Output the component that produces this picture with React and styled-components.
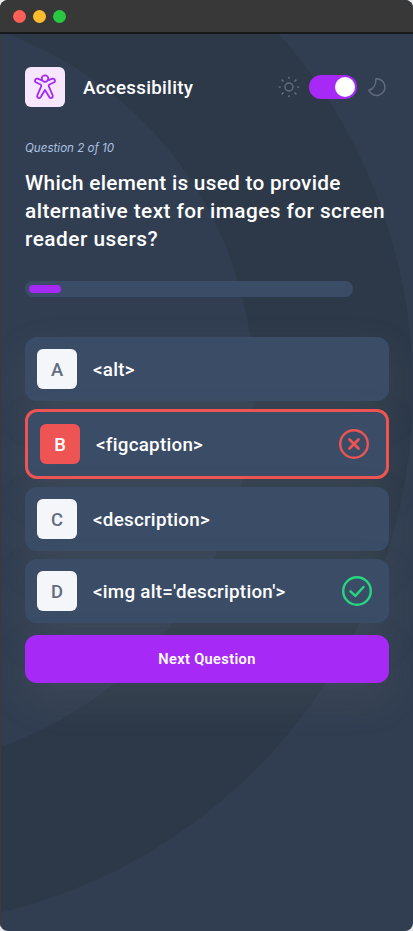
import React, { useState } from "react";
import styled, { createGlobalStyle, css } from "styled-components";

const GlobalStyle = createGlobalStyle`
  *, *::before, *::after { box-sizing: border-box; }
  html, body { margin: 0; padding: 0; background: #e9eaec; }
  button { font: inherit; color: inherit; border: 0; padding: 0; margin: 0; cursor: pointer; }
  h1, h2, p, ul { margin: 0; padding: 0; font: inherit; }
`;

const Window = styled.div`
  display: flex;
  flex-direction: column;
  width: 413px;
  height: 931px;
  border-radius: 8px;
  overflow: hidden;
  background: #313e51;
  color: #fff;
  font-family: Roboto, "Liberation Sans", sans-serif;
  font-weight: 500;
`;

const TitleBar = styled.div`
  display: flex;
  align-items: center;
  gap: 7px;
  flex: none;
  height: 34px;
  padding: 0 13px 0;
  background: #383838;
  border-bottom: 2px solid #19191c;
`;

const TrafficLight = styled.span`
  width: 13px;
  height: 13px;
  border-radius: 50%;
  background: ${(p) => p.$color};
`;

const Page = styled.main`
  position: relative;
  isolation: isolate;
  display: flex;
  flex-direction: column;
  flex: 1;
  overflow: hidden;
  padding: 33px 24px 0;
  border-left: 1px solid #3a3b3d;
`;

const Rings = styled.svg`
  position: absolute;
  inset: 0;
  z-index: -1;
`;

const Header = styled.header`
  display: flex;
  align-items: center;
  height: 40px;
`;

const SubjectTile = styled.span`
  display: grid;
  place-items: center;
  width: 40px;
  height: 40px;
  border-radius: 6px;
  background: #f6e7ff;
`;

const Subject = styled.h1`
  flex: 1;
  margin-left: 18px;
  padding-top: 2px;
  font-size: 18.8px;
  line-height: 24px;
  letter-spacing: 0.28px;
  font-weight: 500;
`;

const ThemeSwitch = styled.div`
  display: flex;
  align-items: center;
  gap: 8px;
`;

const Toggle = styled.button`
  display: flex;
  justify-content: ${(p) => (p.$on ? "flex-end" : "flex-start")};
  align-items: center;
  width: 48px;
  height: 24px;
  padding: 0 2px;
  border-radius: 12px;
  background: #a729f5;
`;

const Knob = styled.span`
  width: 20px;
  height: 20px;
  border-radius: 50%;
  background: #fff;
`;

const Counter = styled.p`
  margin-top: 32px;
  font-family: Inter, Roboto, sans-serif;
  font-size: 11.6px;
  line-height: 18px;
  font-style: italic;
  font-weight: 400;
  color: #abc1e1;
`;

const Question = styled.h2`
  margin-top: 12px;
  font-size: 20.8px;
  line-height: 28px;
  font-weight: 500;
  white-space: nowrap;
`;

const QuestionLine = styled.span`
  display: block;
  letter-spacing: ${(p) => p.$tracking}px;
`;

const Progress = styled.div`
  width: 328px;
  height: 16px;
  margin-top: 28px;
  padding: 4px;
  border-radius: 8px;
  background: #3b4d66;
`;

const ProgressFill = styled.div`
  height: 8px;
  border-radius: 4px;
  background: #a729f5;
`;

const OptionList = styled.ul`
  display: flex;
  flex-direction: column;
  gap: 8px;
  margin-top: 40px;
  list-style: none;
`;

const glow = css`
  box-shadow: 0 16px 40px rgba(143, 143, 143, 0.14);
`;

const Option = styled.li`
  display: flex;
  align-items: center;
  min-height: 64px;
  padding: 12px;
  padding-right: 16px;
  border-radius: 12px;
  background: #3b4d66;
  ${glow}
  ${(p) => p.$wrong && css`
    border: 3px solid #ee5454;
  `}
`;

const Letter = styled.span`
  display: grid;
  place-items: center;
  width: 40px;
  height: 40px;
  padding-top: 2px;
  border-radius: 6px;
  font-size: 18.4px;
  line-height: 22px;
  background: ${(p) => (p.$wrong ? "#ee5454" : "#f4f6fa")};
  color: ${(p) => (p.$wrong ? "#fff" : "#626c7f")};
`;

const Answer = styled.span`
  flex: 1;
  margin-left: 16px;
  padding-top: 2px;
  font-size: 18.8px;
  line-height: 18px;
  letter-spacing: 0.26px;
`;

const NextButton = styled.button`
  height: 48px;
  margin-top: 12px;
  border-radius: 12px;
  background: #a729f5;
  ${glow}
  && {
    font-size: 14.6px;
    font-weight: 600;
    letter-spacing: 0.35px;
  }
`;

const AccessibilityIcon = () => (
  <svg width="24" height="28" viewBox="0 0 24 28" fill="none" stroke="#a729f5" strokeWidth="1.8" strokeLinejoin="round">
    <circle cx="12" cy="5.6" r="3.3" />
    <path d="M8.9 7.4 4.7 5.7C2 4.9 1.1 8.6 3.3 9.5L7.6 11.5C8.2 12 8.4 12.6 8.2 13.4L4.4 22.2C3.5 24.9 6.8 26.1 7.9 23.8L12 17 16.1 23.8C17.2 26.1 20.5 24.9 19.6 22.2L15.8 13.4C15.6 12.6 15.8 12 16.4 11.5L20.7 9.5C22.9 8.6 22 4.9 19.3 5.7L15.1 7.4" />
  </svg>
);

const SunIcon = () => (
  <svg width="24" height="24" viewBox="0 0 24 24" fill="none" stroke="#626c7f" strokeWidth="1.5">
    <circle cx="12" cy="12" r="4" />
    <path d="M12 1.8v2M12 20.2v2M1.8 12h2M20.2 12h2M4.6 4.6l1.9 1.9M17.5 17.5l1.9 1.9M4.6 19.4l1.9-1.9M17.5 6.5l1.9-1.9" />
  </svg>
);

const MoonIcon = () => (
  <svg width="24" height="24" viewBox="0 0 24 24" fill="none" stroke="#626c7f" strokeWidth="1.5" strokeLinejoin="round">
    <path d="M10.9 3.7A8.4 8.4 0 1 1 3.8 15.3C8.2 14 11.2 9.6 10.9 3.7Z" />
  </svg>
);

const WrongIcon = () => (
  <svg width="32" height="32" viewBox="0 0 32 32" fill="none" stroke="#ee5454" strokeWidth="2.4" strokeLinecap="round">
    <circle cx="16" cy="16" r="13.8" />
    <path strokeWidth="2.8" d="m11.5 11.5 9 9m0-9-9 9" />
  </svg>
);

const RightIcon = () => (
  <svg width="32" height="32" viewBox="0 0 32 32" fill="none" stroke="#26d782" strokeWidth="2.4" strokeLinecap="round" strokeLinejoin="round">
    <circle cx="16" cy="16" r="13.8" />
    <path d="m9.5 16.3 4.8 4.6 8.2-8.9" />
  </svg>
);

const questionLines = [
  { text: "Which element is used to provide", tracking: 0.26 },
  { text: "alternative text for images for screen", tracking: 0.44 },
  { text: "reader users?", tracking: 0.51 },
];

const options = [
  { letter: "A", text: "<alt>" },
  { letter: "B", text: "<figcaption>", state: "wrong" },
  { letter: "C", text: "<description>" },
  { letter: "D", text: "<img alt='description'>", state: "right" },
];

export default function App() {
  const [dark, setDark] = useState(true);
  return (
    <>
      <GlobalStyle />
      <Window>
        <TitleBar>
          <TrafficLight $color="#ff5f57" />
          <TrafficLight $color="#febc2e" />
          <TrafficLight $color="#28c840" />
        </TitleBar>
        <Page>
          <Rings width="412" height="897" viewBox="1 34 412 897" fill="none" aria-hidden="true">
            <circle cx="-125.5" cy="389.3" r="458.8" stroke="#2d3949" strokeWidth="159" />
          </Rings>
          <Header>
            <SubjectTile><AccessibilityIcon /></SubjectTile>
            <Subject>Accessibility</Subject>
            <ThemeSwitch>
              <SunIcon />
              <Toggle $on={dark} onClick={() => setDark(!dark)} aria-label="Toggle theme"><Knob /></Toggle>
              <MoonIcon />
            </ThemeSwitch>
          </Header>
          <Counter>Question 2 of 10</Counter>
          <Question>
            {questionLines.map((l) => (
              <QuestionLine key={l.text} $tracking={l.tracking}>{l.text}</QuestionLine>
            ))}
          </Question>
          <Progress><ProgressFill style={{ width: "10%" }} /></Progress>
          <OptionList>
            {options.map((o) => (
              <Option key={o.letter} $wrong={o.state === "wrong"}>
                <Letter $wrong={o.state === "wrong"}>{o.letter}</Letter>
                <Answer>{o.text}</Answer>
                {o.state === "wrong" && <WrongIcon />}
                {o.state === "right" && <RightIcon />}
              </Option>
            ))}
          </OptionList>
          <NextButton>Next Question</NextButton>
        </Page>
      </Window>
    </>
  );
}
